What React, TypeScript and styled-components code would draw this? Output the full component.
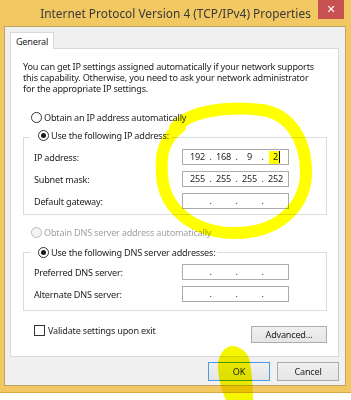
import React from "react";
import styled, { createGlobalStyle, css } from "styled-components";

const GlobalStyle = createGlobalStyle`
  html, body { margin: 0; padding: 0; background: #ffffff; }
  body { font-family: "Noto Sans", "DejaVu Sans", sans-serif; }
  * { box-sizing: border-box; }
`;

const Page = styled.div`
  position: relative;
  width: 351px;
  height: 400px;
  overflow: hidden;
  background: #ffffff;
`;

const Window = styled.div`
  width: 351px;
  height: 393px;
  display: flex;
  flex-direction: column;
  background: #f1c862;
  border-bottom: 1px solid #d6aa48;
`;

const TitleBar = styled.div`
  height: 26px;
  display: grid;
  grid-template-columns: 1fr auto 1fr;
  align-items: start;
`;

const Title = styled.div`
  grid-column: 2;
  font-size: 11.9px;
  line-height: 26px;
  color: #3a3a3a;
  white-space: nowrap;
`;

const CloseButton = styled.div`
  grid-column: 3;
  justify-self: end;
  width: 26px;
  height: 19px;
  margin-right: 7px;
  background: #c75050;
  color: #ffffff;
  font-family: "DejaVu Sans", sans-serif;
  font-weight: bold;
  font-size: 11px;
  display: flex;
  align-items: center;
  justify-content: center;
`;

const Client = styled.div`
  flex: 1;
  margin: 0 5px 6px 4px;
  border: 1px solid #bfa468;
  background: #f0f0f0;
  padding: 5px 0 0 5px;
  display: flex;
  flex-direction: column;
  font-size: 9.1px;
  letter-spacing: -0.2px;
  color: #1e1e1e;
`;

const TabStrip = styled.div`
  display: flex;
`;

const Tab = styled.div`
  position: relative;
  z-index: 1;
  width: 44px;
  height: 17px;
  margin-bottom: -1px;
  border: 1px solid #d9d9d9;
  border-bottom: none;
  background: #ffffff;
  display: flex;
  align-items: center;
  justify-content: center;
`;

const Panel = styled.div`
  width: 329px;
  height: 309px;
  border: 1px solid #d9d9d9;
  background: #ffffff;
  padding: 12px 10px 0 12px;
  display: flex;
  flex-direction: column;
`;

const Paragraph = styled.div`
  display: flex;
  flex-direction: column;
`;

const Line = styled.span`
  display: block;
  height: 11px;
  line-height: 11px;
  white-space: nowrap;
`;

const RadioRow = styled.div<{ $disabled?: boolean; $top?: number }>`
  display: flex;
  align-items: center;
  height: 13px;
  gap: 2px;
  margin-left: 8px;
  margin-top: ${(p) => p.$top ?? 0}px;
  color: ${(p) => (p.$disabled ? "#a2a2a2" : "#1e1e1e")};
  white-space: nowrap;
`;

const RadioCircle = styled.span<{ $checked?: boolean; $disabled?: boolean }>`
  width: 11px;
  height: 11px;
  border-radius: 50%;
  border: 1px solid ${(p) => (p.$disabled ? "#bcbcbc" : "#333333")};
  background: ${(p) => (p.$disabled ? "#f4f4f4" : "#ffffff")};
  display: flex;
  align-items: center;
  justify-content: center;
  flex: none;
  ${(p) =>
    p.$checked &&
    css`
      &::after {
        content: "";
        width: 5px;
        height: 5px;
        border-radius: 50%;
        background: #1a1a1a;
      }
    `}
`;

const Group = styled.div<{ $top: number; $bottom: number }>`
  margin-top: ${(p) => p.$top}px;
  width: 304px;
  border: 1px solid #dcdcdc;
  padding: 0 0 ${(p) => p.$bottom}px 10px;
  display: flex;
  flex-direction: column;
`;

const Legend = styled.div<{ $lift: number }>`
  margin-top: -${(p) => p.$lift}px;
  margin-left: -4px;
  width: fit-content;
  padding-right: 2px;
  background: #ffffff;
`;

const Rows = styled.div<{ $top: number }>`
  margin-top: ${(p) => p.$top}px;
  display: flex;
  flex-direction: column;
  gap: 6px;
  padding-right: 37px;
`;

const FieldRow = styled.div`
  display: flex;
  align-items: center;
  justify-content: space-between;
  height: 16px;
`;

const Label = styled.span`
  white-space: nowrap;
`;

const IpBox = styled.div`
  position: relative;
  width: 107px;
  height: 16px;
  border: 1px solid #ababab;
  background: #ffffff;
  padding-left: 4px;
  display: grid;
  grid-template-columns: 21px 5px 21px 5px 21px 5px 21px;
  align-items: center;
  color: #1e1e1e;
`;

const Octet = styled.span`
  text-align: center;
  line-height: 14px;
`;

const Dot = styled.span`
  text-align: center;
  line-height: 14px;
`;

const Caret = styled.span`
  position: absolute;
  left: 96px;
  top: 1px;
  width: 1px;
  height: 12px;
  background: #000000;
`;

const BottomRow = styled.div`
  margin-top: 15px;
  width: 304px;
  display: flex;
  justify-content: space-between;
  align-items: flex-start;
`;

const CheckRow = styled.div`
  display: flex;
  align-items: center;
  gap: 3px;
  margin-left: 11px;
  height: 11px;
  margin-top: -1px;
  white-space: nowrap;
`;

const CheckBox = styled.span`
  width: 11px;
  height: 11px;
  border: 1px solid #333333;
  background: #ffffff;
  flex: none;
`;

const Button = styled.div<{ $width: number; $height: number; $default?: boolean }>`
  width: ${(p) => p.$width}px;
  height: ${(p) => p.$height}px;
  border: 1px solid ${(p) => (p.$default ? "#4c9be6" : "#acacac")};
  background: linear-gradient(#f0f0f0, #e5e5e5);
  display: flex;
  align-items: center;
  justify-content: center;
  color: #1e1e1e;
  white-space: nowrap;
`;

const DialogButtons = styled.div`
  width: 329px;
  margin-top: 5px;
  display: flex;
  justify-content: flex-end;
  gap: 7px;
`;

const Annotations = styled.svg`
  position: absolute;
  left: 0;
  top: 0;
  pointer-events: none;
  mix-blend-mode: multiply;
`;

type Ip = [string, string, string, string];

function IpField({ value, caret }: { value: Ip; caret?: boolean }) {
  return (
    <IpBox>
      <Octet>{value[0]}</Octet>
      <Dot>.</Dot>
      <Octet>{value[1]}</Octet>
      <Dot>.</Dot>
      <Octet>{value[2]}</Octet>
      <Dot>.</Dot>
      <Octet>{value[3]}</Octet>
      {caret && <Caret />}
    </IpBox>
  );
}

const empty: Ip = ["", "", "", ""];

export default function App() {
  return (
    <Page>
      <GlobalStyle />
      <Window>
        <TitleBar>
          <Title>Internet Protocol Version 4 (TCP/IPv4) Properties</Title>
          <CloseButton>✕</CloseButton>
        </TitleBar>
        <Client>
          <TabStrip>
            <Tab>General</Tab>
          </TabStrip>
          <Panel>
            <Paragraph>
              <Line>You can get IP settings assigned automatically if your network supports</Line>
              <Line>this capability. Otherwise, you need to ask your network administrator</Line>
              <Line>for the appropriate IP settings.</Line>
            </Paragraph>

            <RadioRow $top={17}>
              <RadioCircle />
              Obtain an IP address automatically
            </RadioRow>

            <Group $top={13} $bottom={5}>
              <Legend $lift={9}>
                <RadioRow>
                  <RadioCircle $checked />
                  Use the following IP address:
                </RadioRow>
              </Legend>
              <Rows $top={7}>
                <FieldRow>
                  <Label>IP address:</Label>
                  <IpField value={["192", "168", "9", "2"]} caret />
                </FieldRow>
                <FieldRow>
                  <Label>Subnet mask:</Label>
                  <IpField value={["255", "255", "255", "252"]} />
                </FieldRow>
                <FieldRow>
                  <Label>Default gateway:</Label>
                  <IpField value={empty} />
                </FieldRow>
              </Rows>
            </Group>

            <RadioRow $top={11} $disabled>
              <RadioCircle $disabled />
              Obtain DNS server address automatically
            </RadioRow>

            <Group $top={13} $bottom={8}>
              <Legend $lift={7}>
                <RadioRow>
                  <RadioCircle $checked />
                  Use the following DNS server addresses:
                </RadioRow>
              </Legend>
              <Rows $top={5}>
                <FieldRow>
                  <Label>Preferred DNS server:</Label>
                  <IpField value={empty} />
                </FieldRow>
                <FieldRow>
                  <Label>Alternate DNS server:</Label>
                  <IpField value={empty} />
                </FieldRow>
              </Rows>
            </Group>

            <BottomRow>
              <CheckRow>
                <CheckBox />
                Validate settings upon exit
              </CheckRow>
              <Button $width={76} $height={17}>
                Advanced...
              </Button>
            </BottomRow>
          </Panel>
          <DialogButtons>
            <Button $width={62} $height={19} $default>
              OK
            </Button>
            <Button $width={62} $height={19}>
              Cancel
            </Button>
          </DialogButtons>
        </Client>
      </Window>

      <Annotations width="351" height="400" viewBox="0 0 351 400">
        <path
          d="M 175 128 C 190 110, 230 106, 262 110 C 290 114, 306 140, 306 172 C 306 205, 280 233, 235 233 C 195 233, 164 210, 162 175 C 160 150, 166 138, 180 127"
          fill="none"
          stroke="#ffff00"
          strokeWidth="12"
          strokeLinecap="round"
          strokeLinejoin="round"
        />
        <rect x="269" y="151" width="11" height="13" fill="#ffff00" />
        <path
          d="M 232 346 C 240 346, 248 352, 250 362 C 252 374, 253 388, 253 400 L 226 400 C 222 392, 218 378, 218 366 C 218 356, 224 346, 232 346 Z"
          fill="#f6f600"
        />
      </Annotations>
    </Page>
  );
}
